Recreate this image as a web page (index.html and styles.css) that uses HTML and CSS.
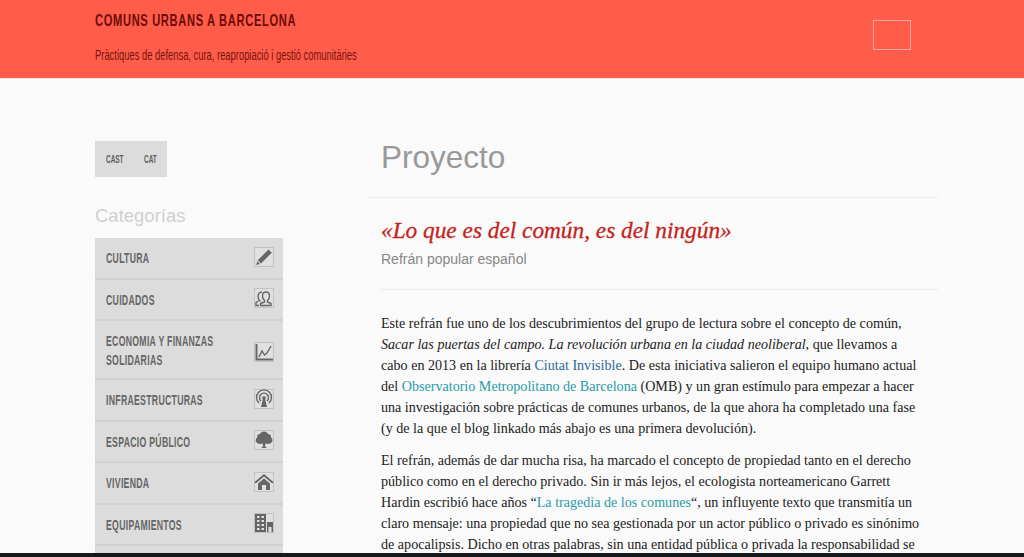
FILE: index.html
```html
<!DOCTYPE html>
<html lang="es">

<head>
    <meta charset="UTF-8">
    <meta name="viewport" content="width=device-width, initial-scale=1.0">
    <title>Proyecto | Comuns urbans a Barcelona</title>
    <link rel="stylesheet" href="styles.css">
</head>

<body>

    <header class="siteHeader">
        <div class="siteBrand">
            <div class="siteTitle">COMUNS URBANS A BARCELONA</div>
            <div class="siteTagline">Pràctiques de defensa, cura, reapropiació i gestió comunitàries</div>
        </div>
        <div class="menuBox"></div>
    </header>

    <div class="pageBody">
        <aside class="sidebar">
            <div class="langSwitch">
                <span>CAST</span>
                <span>CAT</span>
            </div>
            <h3 class="sideTitle">Categorías</h3>
            <ul class="catList">
                <li>
                    <span>CULTURA</span>
                    <svg class="catIcon" viewBox="0 0 20 20"><rect x="0.5" y="0.5" width="19" height="19" class="iconFrame"/><path d="M14.5 2.500l3.300 3.200L7 16.500l-3.300-3.200z"/><path d="M3.200 14.200l2.800 2.700-3.800 1z"/></svg>
                </li>
                <li>
                    <span>CUIDADOS</span>
                    <svg class="catIcon" viewBox="0 0 20 20"><rect x="0.5" y="0.5" width="19" height="19" class="iconFrame"/><g class="iconLine"><path d="M10.500 12.500C9 11.500 8.500 10 8.500 8c0-2.500 1.500-4 3.500-4s3.500 1.500 3.500 4c0 2-.5 3.500-2 4.500v1.500l3.500 1.500V17.500H6.500V15.500l4-1.500z"/><path d="M6.500 13.500C5 12.500 4 11 4 8.500 4 6 5.500 4 8 4M4.500 13 2 14.500v3h3"/></g></svg>
                </li>
                <li class="catTall">
                    <span>ECONOMIA Y FINANZAS<br>SOLIDARIAS</span>
                    <svg class="catIcon" viewBox="0 0 20 20"><rect x="0.5" y="0.5" width="19" height="19" class="iconFrame"/><path class="iconLine iconThick" d="M2.500 2v15.500H19"/><path class="iconLine" d="M5 15l3-6 2.500 4 2.500-2 4-7"/></svg>
                </li>
                <li>
                    <span>INFRAESTRUCTURAS</span>
                    <svg class="catIcon" viewBox="0 0 20 20"><rect x="0.5" y="0.5" width="19" height="19" class="iconFrame"/><g class="iconLine"><path d="M5 14a7.500 7.500 0 1 1 10 0"/><path d="M7 12a4.500 4.500 0 1 1 6 0"/></g><circle cx="10" cy="9" r="1.800"/><path d="M9 10h2l2 8H7z"/></svg>
                </li>
                <li>
                    <span>ESPACIO PÚBLICO</span>
                    <svg class="catIcon" viewBox="0 0 20 20"><rect x="0.5" y="0.5" width="19" height="19" class="iconFrame"/><path d="M10 1.500c2 0 3.500 1 4 2.500 2 0 3.500 1.500 3 3.500 1.800 1 2 4 .5 5-1 1.500-4 1.800-6 1l-.3 3 1.800 1.500H7l2-1.500-.3-3c-2 .8-5 .5-6-1-1.500-1-1.300-4 .5-5C2.700 5.500 4 4 6 4c.5-1.500 2-2.500 4-2.500z"/></svg>
                </li>
                <li>
                    <span>VIVIENDA</span>
                    <svg class="catIcon" viewBox="0 0 20 20"><rect x="0.5" y="0.5" width="19" height="19" class="iconFrame"/><path d="M10 2 19.500 10l-1.200 1.500L10 4.500 1.700 11.500.5 10z"/><path d="M10 6.500l6 5V18h-4v-5H8v5H4v-6.500z"/></svg>
                </li>
                <li>
                    <span>EQUIPAMIENTOS</span>
                    <svg class="catIcon" viewBox="0 0 20 20"><rect x="0.5" y="0.5" width="19" height="19" class="iconFrame"/><path fill-rule="evenodd" d="M1 1h11v18H1zM3 3v2h2.500V3zm4.500 0v2H10V3zM3 7v2h2.500V7zm4.500 0v2H10V7zM3 11v2h2.500v-2zm4.500 0v2H10v-2zM3 15v2h2.500v-2zm4.500 0v2H10v-2z"/><path d="M13 9h6v10h-1.500v-5h-3v5H13z"/></svg>
                </li>
                <li></li>
            </ul>
        </aside>

        <main class="content">
            <h1 class="pageTitle">Proyecto</h1>
            <div class="intro">
                <h2 class="quote">«Lo que es del común, es del ningún»</h2>
                <p class="quoteSource">Refrán popular español</p>
            </div>
            <div class="article">
                <p>Este refrán fue uno de los descubrimientos del grupo de lectura sobre el concepto de común, <em>Sacar las puertas del campo. La revolución urbana en la ciudad neoliberal</em>, que llevamos a cabo en 2013 en la librería <a href="#" class="linkBlue">Ciutat Invisible</a>. De esta iniciativa salieron el equipo humano actual del <a href="#">Observatorio Metropolitano de Barcelona</a> (OMB) y un gran estímulo para empezar a hacer una investigación sobre prácticas de comunes urbanos, de la que ahora ha completado una fase (y de la que el blog linkado más abajo es una primera devolución).</p>
                <p>El refrán, además de dar mucha risa, ha marcado el concepto de propiedad tanto en el derecho público como en el derecho privado. Sin ir más lejos, el ecologista norteamericano Garrett Hardin escribió hace años “<a href="#">La tragedia de los comunes</a>“, un influyente texto que transmitía un claro mensaje: una propiedad que no sea gestionada por un actor público o privado es sinónimo de apocalipsis. Dicho en otras palabras, sin una entidad pública o privada la responsabilidad se</p>
            </div>
        </main>
    </div>

    <div class="bottomEdge"></div>

</body>

</html>
```

FILE: styles.css
```css
body {
    margin: 0;
    height: 557px;
    overflow: hidden;
    background-color: #fafafa;
    font-family: "Liberation Sans", sans-serif;
}

.siteHeader {
    height: 78px;
    padding: 0 113px 0 95px;
    display: flex;
    justify-content: space-between;
    background-color: #ff5c4a;
    border-bottom: 1px solid #f4e4df;
}

/* no condensed font installed, so the narrow headings are squeezed */
.siteTitle,
.siteTagline,
.langSwitch span,
.catList li span {
    transform-origin: left center;
    white-space: nowrap;
}

.siteTitle {
    margin-top: 11px;
    font-size: 17px;
    line-height: 20px;
    letter-spacing: 1px;
    font-weight: bold;
    color: #6e0b08;
    transform: scaleX(0.655);
}

.siteTagline {
    margin-top: 14px;
    font-size: 14px;
    line-height: 20px;
    color: #7a1410;
    transform: scaleX(0.67);
}

.menuBox {
    box-sizing: border-box;
    width: 38px;
    height: 30px;
    margin-top: 20px;
    border: 1px solid #f5a99e;
}

.pageBody {
    display: flex;
    height: 478px;
    overflow: hidden;
    padding-left: 95px;
}

.sidebar {
    width: 188px;
    padding-top: 62px;
}

.langSwitch {
    width: 72px;
    height: 36px;
    box-sizing: border-box;
    padding-left: 11px;
    display: flex;
    align-items: center;
    background-color: #dcdcdc;
    font-size: 11.500px;
    font-weight: bold;
    color: #5e5e5e;
}

.langSwitch span {
    width: 38px;
    flex-shrink: 0;
    transform: scaleX(0.56);
}

.sideTitle {
    margin: 27px 0 0;
    font-size: 18.500px;
    line-height: 24px;
    font-weight: normal;
    color: #d0d0d0;
}

.catList {
    list-style: none;
    margin: 10px 0 0;
    padding: 0;
    background-color: #dcdcdc;
}

.catList li {
    box-sizing: border-box;
    min-height: 41.500px;
    padding: 8px 9px 8px 11px;
    display: flex;
    justify-content: space-between;
    align-items: center;
    border-bottom: 2px solid #d2d2d2;
    font-size: 15px;
    line-height: 19px;
    font-weight: bold;
    letter-spacing: 0.500px;
    color: #666;
}

.catList li.catTall {
    min-height: 59px;
}

.catList li span {
    display: block;
    width: 125px;
    transform: scaleX(0.58);
}

.catIcon {
    width: 20px;
    height: 20px;
    margin-bottom: 2px;
    fill: #666;
    flex-shrink: 0;
}

.catTall .catIcon {
    margin: 5px 0 0;
}

.iconFrame {
    fill: #e0e0e0;
    stroke: #c2c2c2;
}

.iconLine {
    fill: none;
    stroke: #666;
    stroke-width: 1.400;
}

.iconThick {
    stroke-width: 2;
}

.content {
    width: 570px;
    margin-left: 85px;
}

.pageTitle {
    margin: 0;
    padding: 58px 13px 19px;
    font-size: 31.500px;
    line-height: 41px;
    font-weight: normal;
    color: #999;
    border-bottom: 1px solid #ececec;
}

.intro {
    margin-left: 13px;
    padding: 19px 0 20px;
    border-bottom: 1px solid #ececec;
}

.quote {
    margin: 0;
    font-family: "Liberation Serif", serif;
    font-style: italic;
    font-size: 23.300px;
    line-height: 26px;
    font-weight: normal;
    color: #c4231c;
    -webkit-text-stroke: 0.300px #c4231c;
}

.quoteSource {
    margin: 6px 0 0;
    font-size: 14px;
    line-height: 20px;
    color: #888;
}

.article {
    padding: 23px 13px 0;
    font-family: "Liberation Serif", serif;
    font-size: 14.100px;
    line-height: 21px;
    color: #222;
}

.article p {
    margin: 0 0 11px;
}

.article a {
    color: #2a9aa8;
    text-decoration: none;
}

.article .linkBlue {
    color: #2b6a94;
}

.bottomEdge {
    position: fixed;
    left: 0;
    right: 0;
    bottom: 0;
    height: 4px;
    background-color: #14181c;
}
```
